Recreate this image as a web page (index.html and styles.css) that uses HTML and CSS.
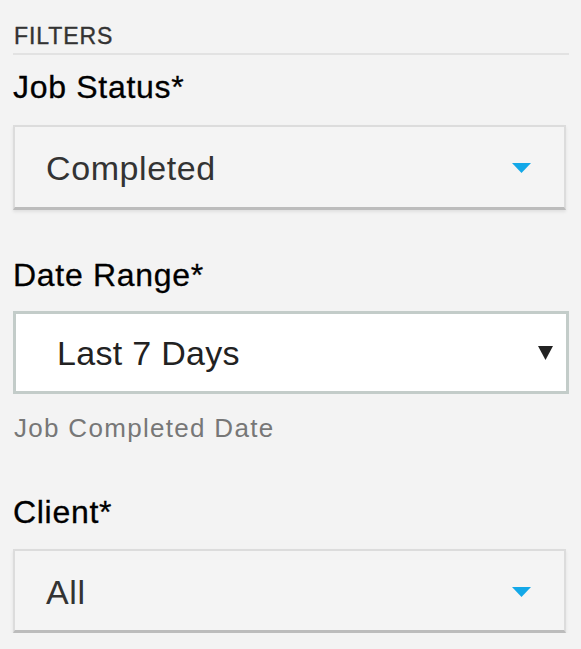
FILE: index.html
```html
<!DOCTYPE html>
<html lang="en">
<head>
<meta charset="utf-8">
<title>Filters</title>
<link rel="stylesheet" href="styles.css">
</head>
<body>
<section class="filters">
  <h2 class="filters-title">FILTERS</h2>

  <div class="field">
    <label class="field-label">Job Status*</label>
    <div class="dropdown">
      <span class="dropdown-value">Completed</span>
      <svg class="caret caret-blue" width="19" height="10" viewBox="0 0 19 10"><path d="M0 0H19L9.5 10Z" fill="#13a8e8"/></svg>
    </div>
  </div>

  <div class="field field-date">
    <label class="field-label">Date Range*</label>
    <div class="native-select">
      <span class="native-value">Last 7 Days</span>
      <svg class="caret caret-dark" width="15" height="14" viewBox="0 0 15 14"><path d="M0 0H15L7.5 14Z" fill="#222"/></svg>
    </div>
    <p class="field-help">Job Completed Date</p>
  </div>

  <div class="field field-client">
    <label class="field-label">Client*</label>
    <div class="dropdown">
      <span class="dropdown-value">All</span>
      <svg class="caret caret-blue" width="19" height="10" viewBox="0 0 19 10"><path d="M0 0H19L9.5 10Z" fill="#13a8e8"/></svg>
    </div>
  </div>
</section>
</body>
</html>
```

FILE: styles.css
```css
html, body {
  margin: 0;
  padding: 0;
  background: #f3f3f3;
}

body {
  font-family: "Liberation Sans", Arial, sans-serif;
}

.filters {
  padding: 25px 12px 0 13px;
  display: flex;
  flex-direction: column;
}

.filters-title {
  margin: 0;
  padding: 0 0 5px 1px;
  font-size: 23px;
  line-height: 1;
  font-weight: 400;
  letter-spacing: 0.9px;
  color: #333;
  -webkit-text-stroke: 0.4px #333;
  border-bottom: 2px solid #e2e2e2;
}

.field {
  display: flex;
  flex-direction: column;
}

.field-label {
  display: block;
  margin: 16px 0 22px 0;
  font-size: 32px;
  line-height: 1;
  letter-spacing: 0.7px;
  color: #000;
  -webkit-text-stroke: 0.3px #000;
}

.field-date .field-label {
  margin-top: 49px;
  margin-bottom: 20px;
}

.field-client .field-label {
  margin-top: 55px;
  margin-bottom: 21px;
}

.dropdown {
  box-sizing: border-box;
  height: 85px;
  margin-right: 3px;
  display: flex;
  align-items: center;
  justify-content: space-between;
  padding: 2px 33px 0 31px;
  background: #f4f4f4;
  border: 2px solid #dcdcdc;
  border-bottom: 3px solid #bcbcbc;
  box-shadow: 0 2px 3px rgba(0, 0, 0, 0.08);
}

.field-client .dropdown {
  height: 84px;
}

.dropdown-value {
  font-size: 34px;
  line-height: 1;
  letter-spacing: 0.6px;
  color: #333;
}

.native-select {
  box-sizing: border-box;
  height: 83px;
  display: flex;
  align-items: center;
  justify-content: space-between;
  padding: 0 13px 0 41px;
  background: #fff;
  border: 3px solid #c3ccc9;
}

.native-value {
  font-size: 34px;
  line-height: 1;
  letter-spacing: 0.3px;
  color: #222;
}

.caret {
  display: block;
  flex: none;
}

.field-help {
  margin: 21px 0 0 1px;
  font-size: 26px;
  line-height: 1;
  letter-spacing: 1.3px;
  color: #777;
}
```
